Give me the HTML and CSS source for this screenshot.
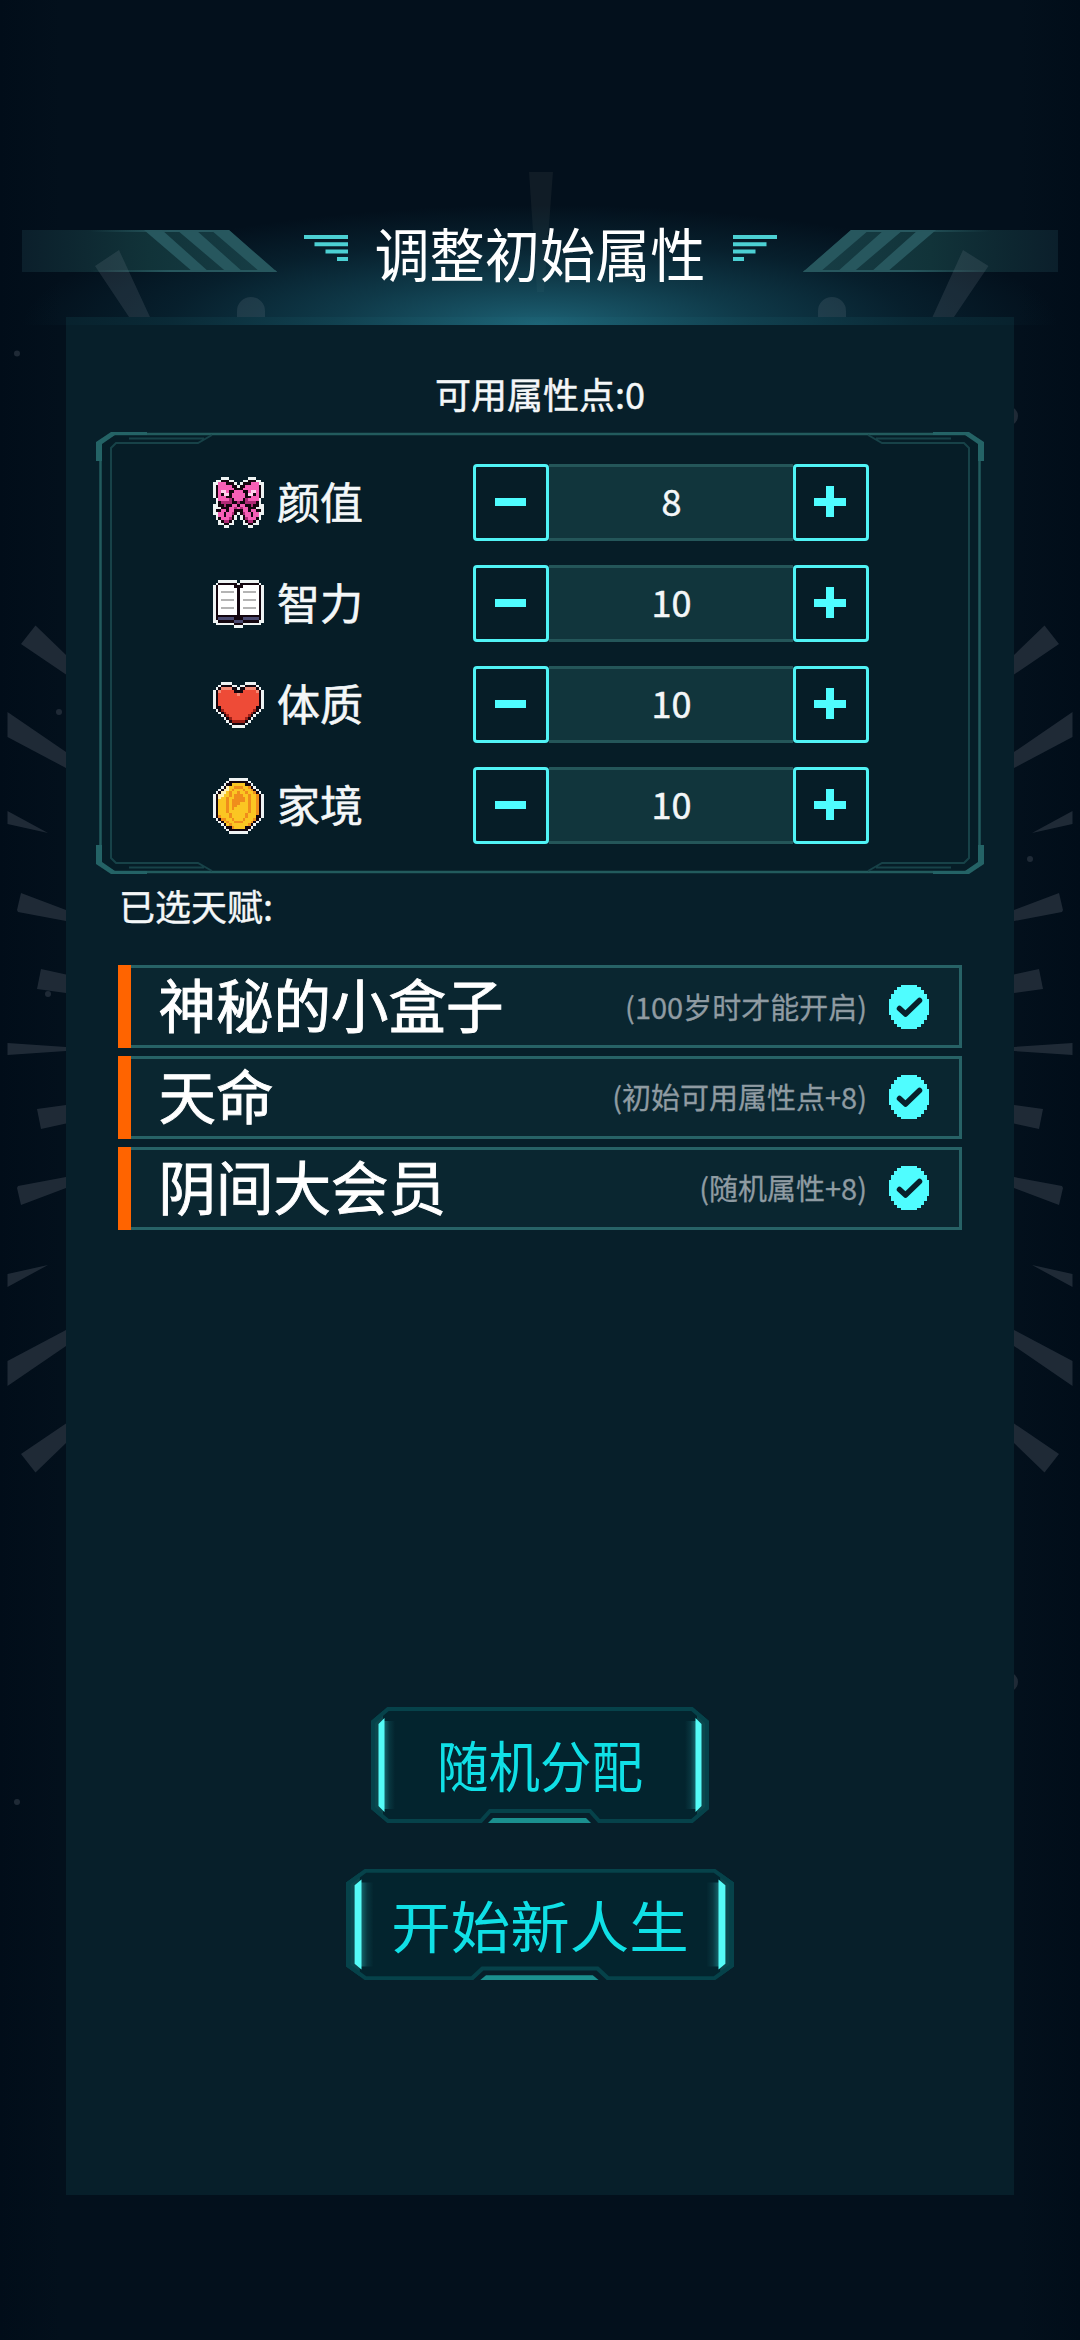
FILE: index.html
```html
<!DOCTYPE html>
<html lang="zh-CN">
<head>
<meta charset="utf-8">
<title>调整初始属性</title>
<link rel="stylesheet" href="styles.css">
</head>
<body>
<svg width="0" height="0" class="defs">
  <defs>
    <linearGradient id="glowL" x1="0" x2="1"><stop offset="0" stop-color="#4ff" stop-opacity=".3"/><stop offset=".5" stop-color="#4ff" stop-opacity=".08"/><stop offset="1" stop-color="#4ff" stop-opacity="0"/></linearGradient>
    <linearGradient id="wing" x1="0" x2="1"><stop offset="0" stop-color="#0b1f2b"/><stop offset=".5" stop-color="#113339"/><stop offset="1" stop-color="#173e46"/></linearGradient>
    <linearGradient id="wingEdge" gradientUnits="userSpaceOnUse" x1="90" y1="0" x2="170" y2="0"><stop offset="0" stop-color="#27575e" stop-opacity="0"/><stop offset="1" stop-color="#27575e"/></linearGradient>
    <g id="rays">
      <path d="M21 644L35.500 625.500L66 655V674.500Z"/>
      <path d="M7.500 712L66 752V768L7.500 737Z"/>
      <path d="M7.500 811L48 833L7.500 824Z"/>
      <path d="M17 910L21 893L66 910V921L18 912Z"/>
      <path d="M37 989L41 969L66 974.500V993Z"/>
      <path d="M7.500 1043L66 1047V1049H7.500Z"/>
    </g>
    <g id="wingShape">
      <path d="M22 230H229L277 272H22Z" fill="url(#wing)"/>
      <path d="M144 230H162L209 272H193ZM177 230H196L243 272H226.500ZM211 230H229L277 272H260Z" fill="#27575e"/>
      <path d="M90 230H229V232H90ZM90 270H275L277 272H90Z" fill="url(#wingEdge)"/>
    </g>
    <g id="corner">
      <path d="M444 2H18L4.500 10V221M444 2H40" fill="none" stroke="#225b5d" stroke-width="2.500"/>
      <path d="M0 10L15 0H51V3H19L6 12V29H0Z" fill="#246366"/>
      <path d="M15 221V16L20 11H102L116 3M33 6.500H108" fill="none" stroke="#174248" stroke-width="2"/>
    </g>
    <symbol id="btn" viewBox="0 0 338 116" preserveAspectRatio="none">
      <path d="M16 0H322L338 14V102L322 116H227L218 105H120L111 116H16L0 102V14Z" fill="#03242e"/>
      <path d="M0 14L12 4V112L0 102ZM338 14L326 4V112L338 102Z" fill="#0c474d"/>
      <path d="M17 2H321L336 15V101L321 114H228L219 104H119L110 114H17L2 101V15Z" fill="none" stroke="#06424a" stroke-width="4"/>
      <path d="M13 14H24V102H13Z" fill="url(#glowL)"/>
      <path d="M13 14H24V102H13Z" fill="url(#glowL)" transform="matrix(-1 0 0 1 338 0)"/>
      <path d="M7.500 17L13.500 11V105L7.500 99ZM330.500 17L324.500 11V105L330.500 99Z" fill="#55fbf7"/>
      <path d="M117 116L122 111H215L220 116Z" fill="#1b908f"/>
    </symbol>
    <symbol id="check" viewBox="0 0 40 44" preserveAspectRatio="none">
      <path d="M12 0H28V2H32V5H35V9H38V14H40V30H38V35H35V39H32V42H28V44H12V42H8V39H5V35H2V30H0V14H2V9H5V5H8V2H12Z" fill="#4ffdff"/>
      <path d="M10.500 23.500L16.500 29L30.500 15.500" fill="none" stroke="#08202b" stroke-width="5.500" stroke-linecap="round" stroke-linejoin="round"/>
    </symbol>
  </defs>
</svg>
<main class="screen">
  <svg class="backdrop" width="1080" height="2340" viewBox="0 0 1080 2340">
    <g fill="#222e3a" fill-opacity=".9">
      <use href="#rays"/>
      <use href="#rays" transform="matrix(1 0 0 -1 0 2098)"/>
      <use href="#rays" transform="matrix(-1 0 0 1 1080 0)"/>
      <use href="#rays" transform="matrix(-1 0 0 -1 1080 2098)"/>
      <circle cx="17" cy="353.500" r="3"/><circle cx="17" cy="1802" r="3"/><circle cx="59" cy="712" r="3"/>
      <circle cx="48" cy="994" r="3"/><circle cx="1030" cy="859" r="3"/>
      <circle cx="1008" cy="416" r="10"/><circle cx="1008" cy="1682" r="10"/>
    </g>
    <path d="M529 172H553L544 292H537Z" fill="#101c26"/>
  </svg>
  <header class="top">
    <div class="glow"></div>
    <svg class="wings" width="1080" height="317" viewBox="0 0 1080 317">
      <use href="#wingShape"/>
      <use href="#wingShape" transform="matrix(-1 0 0 1 1080 0)"/>
      <g fill="#8895a0" fill-opacity=".16">
        <path d="M119 250L95 266L129 317H150ZM963 250L988.500 266L954 317H932.500Z"/>
        <path d="M237 311A14 14 0 0 1 265 311V317H237ZM818 311A14 14 0 0 1 846 311V317H818Z"/>
      </g>
    </svg>
    <div class="title-row">
      <svg width="44" height="26" viewBox="0 0 44 26"><path d="M0 0H44V4H0ZM10.500 7.300H44V11.300H10.500ZM21.500 14.600H44V18.600H21.500ZM33 22H44V26H33Z" fill="#4cd0d3"/></svg>
      <h1>调整初始属性</h1>
      <svg width="44" height="26" viewBox="0 0 44 26"><path d="M0 0H44V4H0ZM0 7.300H33.500V11.300H0ZM0 14.600H22.500V18.600H0ZM0 22H11V26H0Z" fill="#4cd0d3"/></svg>
    </div>
  </header>
  <section class="panel">
    <p class="points">可用属性点:0</p>
    <div class="attrs">
      <svg class="frame" width="888" height="442" viewBox="0 0 888 442">
        <rect x="6" y="3" width="876" height="436" fill="#061d27"/>
        <use href="#corner"/>
        <use href="#corner" transform="matrix(-1 0 0 1 888 0)"/>
        <use href="#corner" transform="matrix(1 0 0 -1 0 442)"/>
        <use href="#corner" transform="matrix(-1 0 0 -1 888 442)"/>
      </svg>
      <div class="attr"><span class="icon" data-sprite="bow"></span><span class="name">颜值</span>
        <div class="stepper"><button class="minus"></button><output>8</output><button class="plus"></button></div></div>
      <div class="attr"><span class="icon" data-sprite="book"></span><span class="name">智力</span>
        <div class="stepper"><button class="minus"></button><output>10</output><button class="plus"></button></div></div>
      <div class="attr"><span class="icon" data-sprite="heart"></span><span class="name">体质</span>
        <div class="stepper"><button class="minus"></button><output>10</output><button class="plus"></button></div></div>
      <div class="attr"><span class="icon" data-sprite="coin"></span><span class="name">家境</span>
        <div class="stepper"><button class="minus"></button><output>10</output><button class="plus"></button></div></div>
    </div>
    <p class="chosen">已选天赋:</p>
    <ul class="talents">
      <li><b>神秘的小盒子</b><span>(100岁时才能开启)</span><svg width="40" height="44"><use href="#check"/></svg></li>
      <li><b>天命</b><span>(初始可用属性点+8)</span><svg width="40" height="44"><use href="#check"/></svg></li>
      <li><b>阴间大会员</b><span>(随机属性+8)</span><svg width="40" height="44"><use href="#check"/></svg></li>
    </ul>
    <div class="actions">
      <button class="action random"><svg width="338" height="116"><use href="#btn"/></svg><span>随机分配</span></button>
      <button class="action start"><svg width="388" height="111"><use href="#btn"/></svg><span>开始新人生</span></button>
    </div>
  </section>
</main>
<script src="sprites.js"></script>
</body>
</html>
```
FILE: styles.css
```css
* { box-sizing: border-box; margin: 0; padding: 0; }
body { background: #020e1a; font-family: "Noto Sans CJK SC", sans-serif; color: #f4f7f8; }
.defs { position: absolute; }
.screen { position: relative; width: 1080px; height: 2340px; display: flex; flex-direction: column; overflow: hidden;
  background: linear-gradient(90deg, #010d19, #03101c 60px, #03101c 1020px, #010d19); }
.backdrop { position: absolute; left: 0; top: 0; }
.top { position: relative; z-index: 2; height: 317px; padding-top: 215px; }
.glow { position: absolute; left: 22px; right: 22px; top: 205px; height: 120px;
  background: radial-gradient(ellipse 518px 120px at 50% 100%, rgba(36, 122, 143, .76), rgba(25, 92, 110, .54) 40%, rgba(16, 66, 82, .3) 72%, rgba(10, 50, 66, 0)); }
.wings { position: absolute; left: 0; top: 0; }
.title-row { position: relative; height: 82px; display: flex; justify-content: center; align-items: center; gap: 26.500px; }
.title-row svg { margin-bottom: 17px; }
.title-row h1 { font-size: 55.200px; line-height: 82px; font-weight: 400; color: #fff; width: 332px; text-align: center; white-space: nowrap;
  transform: translateY(-4px) scaleY(1.05); }
.panel { position: relative; margin: 0 66px; height: 1878px; background: #071f2a; display: flex; flex-direction: column; }
.points { margin-top: 50px; text-align: center; font-size: 36px; line-height: 52px; -webkit-text-stroke: .5px; }
.attrs { position: relative; margin: 13px 30px 0; width: 888px; height: 442px; padding: 32px 0 0 117px; display: flex; flex-direction: column; gap: 24px; }
.frame { position: absolute; left: 0; top: 0; }
.attr { position: relative; display: flex; align-items: center; height: 77px; }
.icon { width: 52px; height: 58px; display: flex; align-items: center; }
.name { font-size: 43px; line-height: 60px; margin-left: 12px; width: 196px; padding-bottom: 6px; -webkit-text-stroke: .6px; }
.stepper { display: flex; width: 396px; height: 77px; }
.stepper button { width: 76px; height: 77px; border: 3px solid #50f3f5; border-radius: 4px; background-color: #061d27;
  background-repeat: no-repeat; }
.minus { background-image: linear-gradient(#4ffdff, #4ffdff); background-size: 31px 8px; background-position: 19px 31px; }
.plus { background-image: linear-gradient(#4ffdff, #4ffdff), linear-gradient(#4ffdff, #4ffdff); background-size: 32px 8px, 8px 31px; background-position: 18px 31px, 30px 19px; }
.stepper output { flex: 1; border: solid #245659; border-width: 3px 0; background: #11353c; text-align: center; font-size: 36px; line-height: 66px;
  padding-left: 1px; -webkit-text-stroke: .5px; }
.chosen { margin: 5px 0 0 53px; font-size: 36px; line-height: 52px; -webkit-text-stroke: .4px; }
.talents { list-style: none; margin: 34px 52px 0; display: flex; flex-direction: column; gap: 7.500px; }
.talents li { height: 83.300px; display: flex; align-items: center; background: #0a2630; border: 3px solid #276266; border-left: 0; padding-right: 30px; }
.talents li::before { content: ""; width: 13px; height: 83.300px; margin: -3px 0; background: #ff6400; }
.talents b { flex: 1; margin-left: 27.500px; font-size: 57.500px; line-height: 76px; font-weight: 400; color: #fff; padding-bottom: 7px; -webkit-text-stroke: .9px; }
.talents span { font-size: 29px; color: #8f9ba2; margin-right: 22px; padding-bottom: 2px; -webkit-text-stroke: .3px; }
.actions { margin-top: 477px; display: flex; flex-direction: column; align-items: center; gap: 46px; }
.action { display: grid; border: 0; background: none; font-family: inherit; color: #10e0e6; }
.action > * { grid-area: 1 / 1; place-self: center; }
.action svg { display: block; }
.random span { font-size: 51.500px; line-height: 76px; transform: translateY(-1px) scaleY(1.06); }
.start span { font-size: 59.500px; line-height: 80px; transform: scaleY(.94); }
```
FILE: sprites.js
```js
const colors = { W: '#eef3f3', K: '#14060f', P: '#f65fb6', D: '#b02a76', L: '#ffffff', G: '#b4b4b4', N: '#4b4a70',
  R: '#ee4b37', H: '#f58a76', X: '#9c2018', Y: '#fbc622', O: '#f08d1c', V: '#fff0b0', I: '#ffd0ec' };

// Half rows: the last column is the axis of symmetry.
const halves = {
  bow: ['...WWW....', '.WWKKKWW..', 'WWPPPKKKW.', 'WKPPPPPKKW', 'WKPPPPPPKK', 'WKPIIPKKPP', 'WKPKIIKPPP', 'WKPPPKKPPP',
    '.WPPPPDKPP', '.WKDDDDKKD', 'WWKKDKKPPK', 'WWWKKKPPDP', 'WKKPPKPPKK', 'WWPPKPPDKW', '.WPPKPPKW.', '.WKPPPDKW.',
    '..WKDDKW..', '..WWKKWW..', '....WW....'],
  book: ['..WWWWWWW.', '.WKKKKKKKW', 'WKLLLLLLKK', 'WKLLLLLLLK', 'WKLGGGGGLK', 'WKLLLLLLLK', 'WKLLLLLLLK', 'WKLGGGGGLK',
    'WKLLLLLLLK', 'WKLLLLLLLK', 'WKLGGGGGLK', 'WKLLLLLLLK', 'WKLLLLLLLK', 'WKKKKKKKKK', 'WKNNNNNNKK', 'WWKKKKKKNN',
    '.WWWWWWWKK', '........WW'],
  heart: ['...WWWW...', '..WKKKKWW.', '.WKHHHHKKW', 'WKHRRRRRKK', 'WKRRRRRRRH', 'WKRRRRRRRR', 'WKRRRRRRRR', 'WKRRRRRRRR',
    'WKRRRRRRRR', 'WKKRRRRRRR', '.WKXRRRRRR', '..WKXRRRRR', '...WKXRRRR', '....WKXRRR', '.....WKXXX', '......WKKK',
    '.......WWW']
};
const sprites = {
  coin: ['......WWWWWWW......', '.....WKKKKKKKW.....', '....WKKYYYYYKKW....', '...WKVYYOOOYYOKW...', '..WKVVYOYYYOYYOKW..',
    '.WKVVYOYYOYYOYYOKW.', 'WKVVYYOYOOOYYOYYOKW', 'WKVYYOYYOOOOYOYYOKW', 'WKYYYOYOOOOOYOYYOKW', 'WKYYYOYOOOYYYOYYOKW',
    'WKYYYOYOOYYYYOYYOKW', 'WKYYYOYOYYYYYOYYOKW', 'WKYYYOYYYYYYYOYYOKW', 'WKYYYYOYYYYYOYYYOKW', 'WKOYYYOYYYYYOYYYKKW',
    '.WKOOYYOYYYOYYYOKW.', '..WKYOYYOOOYYYOKW..', '...WKYOYYYYYYOKW...', '....WKKOYYYYKKW....', '.....WKKKKKKKW.....',
    '......WWWWWWW......']
};
for (const key in halves) {
  sprites[key] = halves[key].map(row => row + [...row.slice(0, 9)].reverse().join(''));
}
document.querySelectorAll('[data-sprite]').forEach(slot => {
  const rows = sprites[slot.dataset.sprite];
  let cells = '';
  rows.forEach((row, y) => [...row].forEach((c, x) => {
    if (colors[c]) cells += `<rect x="${x}" y="${y}" width="1" height="1" fill="${colors[c]}"/>`;
  }));
  slot.innerHTML = `<svg width="51" height="${Math.round(rows.length * 2.69)}" viewBox="0 0 19 ${rows.length}" preserveAspectRatio="none" shape-rendering="crispEdges">${cells}</svg>`;
});
```
